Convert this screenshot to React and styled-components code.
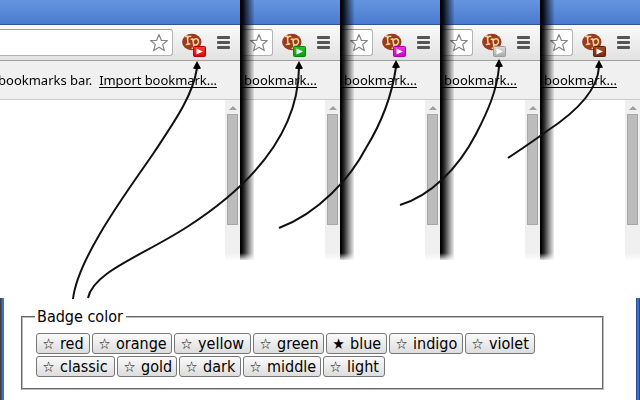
import React from "react";
import styled, { createGlobalStyle } from "styled-components";

const GlobalStyle = createGlobalStyle`
  * { box-sizing: border-box; }
  body { margin: 0; background: #fff; overflow: hidden; }
`;

const Page = styled.main`
  position: relative;
  display: flex;
  flex-direction: column;
  width: 640px;
  height: 400px;
  overflow: hidden;
  background: #fff;
  color: #000;
`;

const WindowStrip = styled.section`
  display: grid;
  grid-template-columns: 240px repeat(4, 100px);
  height: 260px;
  margin-bottom: 38px;
  mask-image: linear-gradient(#000 253px, transparent 261px);
`;

const BrowserWindow = styled.article`
  position: relative;
  display: flex;
  flex-direction: column;
  overflow: hidden;
  background: #fff;
`;

const EdgeShadow = styled.div`
  position: absolute;
  inset: 0 auto 0 0;
  width: 14px;
  background: linear-gradient(90deg, #000 0, #000 1px, rgba(0, 0, 0, 0.85) 4px, rgba(0, 0, 0, 0.52) 8px, rgba(0, 0, 0, 0.22) 12px, rgba(0, 0, 0, 0.08) 14px);
`;

const TitleBar = styled.div`
  flex: 0 0 25px;
  background: linear-gradient(#6594df, #4b7bd0);
  border-bottom: 1px solid #2d5499;
`;

const Toolbar = styled.div`
  flex: 0 0 36px;
  display: flex;
  justify-content: flex-end;
  align-items: flex-start;
  padding: 4px 9px 0 0;
  background: linear-gradient(#fafafa, #e2e2e2);
  border-bottom: 1px solid #a0a0a0;
`;

const AddressBox = styled.div`
  flex: 1;
  display: flex;
  justify-content: flex-end;
  height: 27px;
  padding: 3px 3px 0 0;
  border: 1px solid #b3b3b3;
  border-top-color: #9d9d9d;
  border-left: 0;
  border-radius: 0 3px 3px 0;
  background: #fff;
`;

const ExtensionSlot = styled.div`
  width: 26px;
  height: 26px;
  margin: 3px 8px 0 9px;
`;

const MenuButton = styled.div`
  display: flex;
  flex-direction: column;
  gap: 2px;
  width: 15px;
  padding: 7px 1px 0;
`;

const MenuLine = styled.span`
  height: 3px;
  border-radius: 1px;
  background: #555;
`;

const BookmarksBar = styled.div`
  flex: 0 0 39px;
  display: flex;
  justify-content: flex-end;
  align-items: flex-start;
  gap: 7px;
  padding: 11px 23px 0 0;
  background: #f0f0f0;
  border-bottom: 1px solid #cbcbcb;
  font: 13px/17px "Noto Sans", sans-serif;
  white-space: pre;
`;

const BarText = styled.span`
  flex: none;
`;

const ImportLink = styled.span`
  flex: none;
  height: 16px;
  padding-left: ${(p) => (p.$extended ? 4 : 0)}px;
  border-bottom: 1px solid #000;
  letter-spacing: ${(p) => (p.$extended ? 0 : -0.05)}px;
`;

const Viewport = styled.div`
  flex: 1;
  display: flex;
  justify-content: flex-end;
`;

const ScrollTrack = styled.div`
  display: flex;
  flex-direction: column;
  align-items: center;
  width: 15px;
  padding-top: 6px;
  background: #f0f0f0;
`;

const ScrollArrow = styled.div`
  border: 4px solid transparent;
  border-top: 0;
  border-bottom: 4px solid #a0a0a0;
`;

const ScrollThumb = styled.div`
  width: 11px;
  height: 111px;
  margin-top: 4px;
  border: 1px solid #a7a7a7;
  background: #bcbcbc;
`;

const OptionsWindow = styled.section`
  height: 102px;
  padding: 9px 32px 0 17px;
  border: solid #3c69b5;
  border-width: 0 4px;
  border-image: linear-gradient(90deg, #414141 0 1px, #2d559f 1px 2px, #3f70c3 2px 4px, transparent 4px 636px, #28509a 636px 637px, #3f70c3 637px 639px, #234988 639px) 0 4;
`;

const ColorGroup = styled.fieldset`
  height: 83px;
  width: 583px;
  margin: 0;
  padding: 6px 10px 0 13px;
  border: 2px groove #bbb;
  font: 16px/18px "DejaVu Sans Condensed", "DejaVu Sans", sans-serif;
  font-stretch: condensed;
`;

const GroupTitle = styled.legend`
  width: 91px;
  height: 20px;
  margin-left: -1px;
  padding: 0 2px;
  line-height: 20px;
  white-space: nowrap;
`;

const ButtonRow = styled.div`
  display: flex;
  gap: 2px;
  margin-bottom: 2px;
`;

const ColorButton = styled.button`
  flex: none;
  display: flex;
  align-items: center;
  gap: 5px;
  width: ${(p) => p.$width}px;
  height: 21px;
  padding: 0 0 0 5px;
  border: 1px solid #777;
  border-radius: 3px;
  background: linear-gradient(#fafafa, #ddd);
  color: #000;
  font: inherit;
  white-space: nowrap;
`;

const StarGlyph = styled.span`
  width: 13px;
  font-size: 15px;
`;

const Annotations = styled.svg`
  position: absolute;
  inset: 0;
  pointer-events: none;
`;

const windows = [
  { id: "red", light: "#ff3a35", fill: "#df0008", edge: "#b40000", play: "#fff" },
  { id: "green", light: "#2bc52b", fill: "#089e0b", edge: "#04860a", play: "#fff" },
  { id: "magenta", light: "#ee32e9", fill: "#cc00c8", edge: "#ae00ad", play: "#fff" },
  { id: "silver", light: "#dedede", fill: "#aaa", edge: "#9c9c9c", play: "#fff" },
  { id: "brown", light: "#a64a27", fill: "#77280e", edge: "#5b2110", play: "#fff" },
];

const rows = [
  [["red", 54], ["orange", 80], ["yellow", 77], ["green", 71], ["blue", 61], ["indigo", 74], ["violet", 70]],
  [["classic", 79], ["gold", 60], ["dark", 62], ["middle", 78], ["light", 62]],
];

const arrows = [
  { line: "M73 299 C78 255 135 181 155 151 S193 95 197 68", x: 197, y: 61 },
  { line: "M88 298 C93 272 142 256 187 227 S298 145 299 68", x: 299, y: 61 },
  { line: "M279 228 C319 213 351 177 366 148 C382 122 392 95 396 67", x: 396, y: 60 },
  { line: "M400 205 C430 196 458 169 476 134 C488 111 497 90 499 67", x: 499, y: 59 },
  { line: "M508 158 C520 150 535 140 547 131 C567 118 597 95 599 67", x: 599, y: 60 },
];

function BookmarkStar() {
  return (
    <svg width="20" height="20" viewBox="0 0 20 20">
      <path d="M10 1.5 L12.3 7.3 L18.4 7.5 L13.7 11.4 L15.3 17.6 L10 14.2 L4.7 17.6 L6.3 11.4 L1.6 7.5 L7.7 7.3Z" fill="#fff" stroke="#858585" strokeWidth="1.2" strokeLinejoin="round" />
    </svg>
  );
}

function ExtensionIcon({ badge }) {
  return (
    <svg width="26" height="26" viewBox="0 0 26 26">
      <defs>
        <linearGradient id={`badge-${badge.id}`} x2="0" y2="1">
          <stop stopColor={badge.light} />
          <stop offset="1" stopColor={badge.fill} />
        </linearGradient>
      </defs>
      <ellipse cx="9.8" cy="10" rx="9.7" ry="8.2" fill="#9b3921" />
      <g fill="none" stroke="#f8d58c" strokeLinecap="round" strokeLinejoin="round">
        <path strokeWidth="1.5" d="M3.4 4.5 L5.2 4 L6.1 12 M4.4 12.4 L7.8 12 M5.8 6.2 Q7 3.4 8.7 4.4" />
        <path strokeWidth="1.5" d="M9.3 7.3 L10.8 7 L12.1 16 M10.2 16.2 L13.4 16 M11.1 9 C12 6.2 16 5.8 16.5 9.2 C16.9 12.4 13.8 13.8 11.7 12.2" />
      </g>
      <rect x="11.5" y="14.5" width="12" height="10" rx="1" fill={`url(#badge-${badge.id})`} stroke={badge.edge} />
      <path d="M14.5 16.4 V22.5 L21 19.5Z" fill={badge.play} />
    </svg>
  );
}

function Browser({ badge, first }) {
  return (
    <BrowserWindow>
      <TitleBar />
      <Toolbar>
        <AddressBox><BookmarkStar /></AddressBox>
        <ExtensionSlot><ExtensionIcon badge={badge} /></ExtensionSlot>
        <MenuButton><MenuLine /><MenuLine /><MenuLine /></MenuButton>
      </Toolbar>
      <BookmarksBar>
        {first && <BarText>bookmarks bar.</BarText>}
        <ImportLink $extended={!first}>{first ? "Import bookmark..." : "bookmark..."}</ImportLink>
      </BookmarksBar>
      <Viewport>
        <ScrollTrack><ScrollArrow /><ScrollThumb /></ScrollTrack>
      </Viewport>
      {!first && <EdgeShadow />}
    </BrowserWindow>
  );
}

export default function App() {
  return (
    <Page>
      <GlobalStyle />
      <WindowStrip>
        {windows.map((badge, i) => <Browser key={badge.id} badge={badge} first={i === 0} />)}
      </WindowStrip>
      <OptionsWindow>
        <ColorGroup>
          <GroupTitle>Badge color</GroupTitle>
          {rows.map((row, i) => (
            <ButtonRow key={i}>
              {row.map(([name, width]) => (
                <ColorButton key={name} $width={width}>
                  <StarGlyph>{name === "blue" ? "★" : "☆"}</StarGlyph>
                  <span>{name}</span>
                </ColorButton>
              ))}
            </ButtonRow>
          ))}
        </ColorGroup>
      </OptionsWindow>
      <Annotations width="640" height="400" viewBox="0 0 640 400">
        {arrows.map((a) => (
          <g key={a.x}>
            <path d={a.line} fill="none" stroke="#111" strokeWidth="2" />
            <path d={`M${a.x} ${a.y} l4 7.5 q-4 1.4 -8 0Z`} fill="#000" />
          </g>
        ))}
      </Annotations>
    </Page>
  );
}
